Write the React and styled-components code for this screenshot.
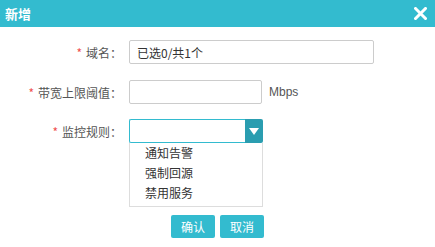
import React from "react";
import styled, { createGlobalStyle } from "styled-components";

const Global = createGlobalStyle`
  html, body { margin: 0; padding: 0; background: #fff; }
  body { font-family: "Microsoft YaHei", "Noto Sans CJK SC", "Liberation Sans", sans-serif; font-size: 12px; color: #333; }
`;

const Dialog = styled.div`
  width: 435px;
  height: 247px;
  background: #fff;
  position: relative;
`;

const Header = styled.div`
  height: 27px;
  background: #33bbcf;
  display: flex;
  align-items: center;
  justify-content: space-between;
  padding: 0 8px 0 5px;
  box-sizing: border-box;
`;

const Title = styled.span`
  color: #fff;
  font-size: 13px;
  font-weight: bold;
`;

const Close = styled.svg`
  width: 13px;
  height: 13px;
  display: block;
`;

const Body = styled.div`
  padding-top: 13px;
  display: flex;
  flex-direction: column;
`;

const Row = styled.div`
  display: grid;
  grid-template-columns: 129px auto auto;
  align-items: center;
  justify-content: start;
  margin-bottom: ${(p) => p.$mb || 0}px;
`;

const Label = styled.label`
  text-align: right;
  padding-right: 7px;
  color: #555;
  font-size: 12px;
  white-space: nowrap;
`;

const Star = styled.span`
  color: #f0504f;
  margin-right: 4px;
  font-size: 12px;
`;

const Input = styled.div`
  box-sizing: border-box;
  width: ${(p) => p.$w}px;
  height: 24px;
  border: 1px solid #ccc;
  border-radius: 2px;
  padding: 0 7px;
  display: flex;
  align-items: center;
  color: #333;
  font-size: 12px;
`;

const Unit = styled.span`
  margin-left: 7px;
  color: #555;
  font-family: "Liberation Sans", Arial, sans-serif;
  font-size: 12px;
`;

const SelectWrap = styled.div`
  position: relative;
  width: 134px;
`;

const Select = styled.div`
  display: flex;
  height: 24px;
  box-sizing: border-box;
`;

const SelectBox = styled.div`
  flex: 1;
  border: 1px solid #33bbcf;
  border-right: none;
  border-radius: 2px 0 0 2px;
`;

const Arrow = styled.div`
  width: 18px;
  background: #2a9db0;
  border-radius: 0 2px 2px 0;
  display: flex;
  align-items: center;
  justify-content: center;
`;

const Menu = styled.ul`
  position: absolute;
  top: 24px;
  left: 0;
  width: 134px;
  box-sizing: border-box;
  margin: 0;
  list-style: none;
  padding: 0 0 3px;
  border: 1px solid #ddd;
  border-top: none;
  background: #fff;
  z-index: 2;
`;

const Item = styled.li`
  height: 20px;
  line-height: 20px;
  padding-left: 15px;
  color: #333;
  font-size: 12px;
`;

const Footer = styled.div`
  display: flex;
  justify-content: center;
  gap: 5px;
  margin-top: 72px;
`;

const Button = styled.button`
  width: 44px;
  height: 23px;
  border: none;
  border-radius: 2px;
  background: #33bbcf;
  color: #fff;
  font-family: inherit;
  font-size: 12px;
  padding: 0;
`;

export default function App() {
  return (
    <>
      <Global />
      <Dialog>
        <Header>
          <Title>新增</Title>
          <Close viewBox="0 0 13 13">
            <path d="M1.5 1.5 L11.5 11.5 M11.5 1.5 L1.5 11.5" stroke="#fff" strokeWidth="3" strokeLinecap="square" />
          </Close>
        </Header>
        <Body>
          <Row $mb={16}>
            <Label><Star>*</Star>域名：</Label>
            <Input $w={245}>已选0/共1个</Input>
          </Row>
          <Row $mb={15}>
            <Label><Star>*</Star>带宽上限阈值：</Label>
            <Input $w={133} />
            <Unit>Mbps</Unit>
          </Row>
          <Row>
            <Label><Star>*</Star>监控规则：</Label>
            <SelectWrap>
              <Select>
                <SelectBox />
                <Arrow>
                  <svg width="10" height="7" viewBox="0 0 10 7">
                    <path d="M0 0 H10 L5 7 Z" fill="#fff" />
                  </svg>
                </Arrow>
              </Select>
              <Menu>
                <Item>通知告警</Item>
                <Item>强制回源</Item>
                <Item>禁用服务</Item>
              </Menu>
            </SelectWrap>
          </Row>
          <Footer>
            <Button>确认</Button>
            <Button>取消</Button>
          </Footer>
        </Body>
      </Dialog>
    </>
  );
}
